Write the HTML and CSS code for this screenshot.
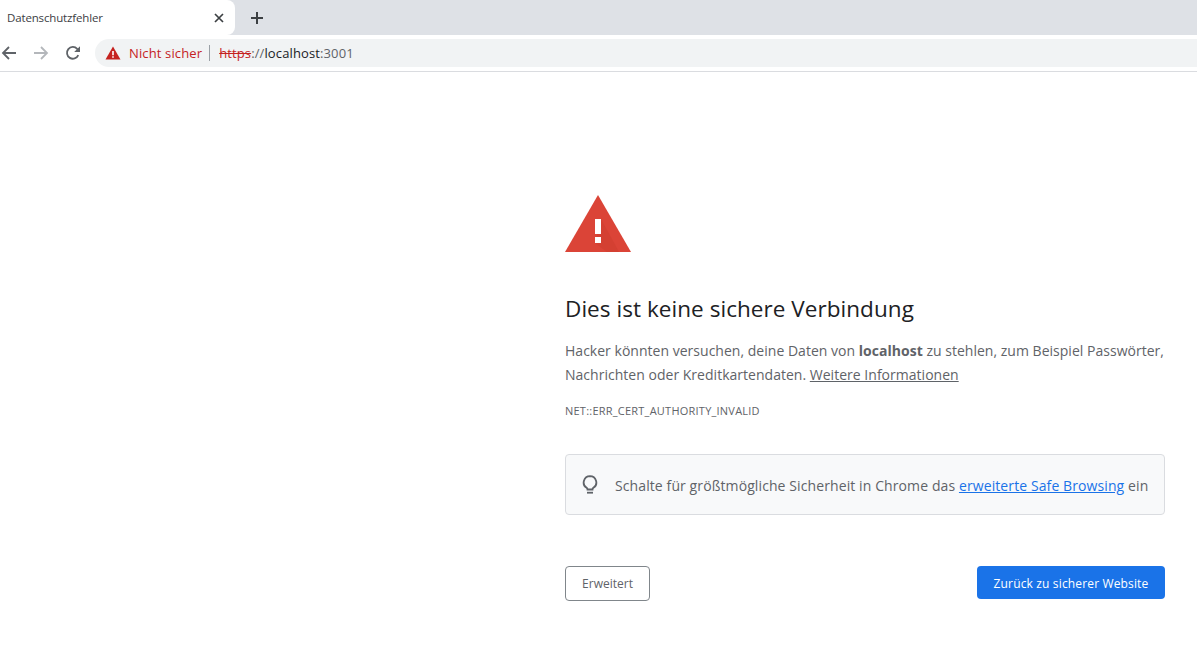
FILE: index.html
```html
<!DOCTYPE html>
<html lang="de">
<head>
<meta charset="utf-8">
<title>Datenschutzfehler</title>
<link rel="stylesheet" href="styles.css">
</head>
<body>
<header class="chrome">
  <div class="tabstrip">
    <div class="tab">
      <span class="tab-title">Datenschutzfehler</span>
      <svg class="tab-close" width="12" height="12" viewBox="0 0 12 12"><path d="M2 2l8 8M10 2l-8 8" stroke="#3c4043" stroke-width="1.700" fill="none"/></svg>
    </div>
    <svg class="new-tab" width="14" height="14" viewBox="0 0 14 14"><path d="M7 1v12M1 7h12" stroke="#3c4043" stroke-width="2" fill="none"/></svg>
  </div>
  <div class="toolbar">
    <svg class="nav-back" width="16" height="16" viewBox="0 0 16 16"><path d="M15 8H2M8 2L2 8l6 6" stroke="#5f6368" stroke-width="1.800" fill="none"/></svg>
    <svg class="nav-forward" width="16" height="16" viewBox="0 0 16 16"><path d="M1 8h13M8 2l6 6-6 6" stroke="#b4b7bb" stroke-width="1.800" fill="none"/></svg>
    <svg class="nav-reload" width="16" height="16" viewBox="0 0 16 16"><path d="M13.300 10.200A5.900 5.900 0 1 1 12.200 3.800L14 5.600" stroke="#5f6368" stroke-width="1.800" fill="none"/><path d="M15 1.200V7H9.200z" fill="#5f6368"/></svg>
    <div class="omnibox">
      <svg class="omni-warn" width="16" height="14" viewBox="0 0 16 14"><path d="M8 0.500L15.500 13.500H0.500z" fill="#c5221f"/><path d="M7.200 5h1.600v4.200H7.200zM7.200 10.200h1.600v1.600H7.200z" fill="#fff"/></svg>
      <span class="omni-status">Nicht sicher</span>
      <span class="omni-sep"></span>
      <span class="omni-url"><s class="omni-scheme">https</s><span class="omni-dim">://</span>localhost<span class="omni-dim">:3001</span></span>
    </div>
  </div>
</header>
<main class="page">
  <div class="interstitial">
    <svg class="big-warn" width="66" height="57" viewBox="0 0 66 57">
      <path d="M33 0L66 57H0z" fill="#db4437"/>
      <path d="M36 24L47 44 54 57H42L30 48z" fill="#c53929" opacity="0.300"/>
      <path d="M30 24h6v15h-6zM30 42h6v6h-6z" fill="#fff"/>
    </svg>
    <h1 class="headline">Dies ist keine sichere Verbindung</h1>
    <p class="body-text">Hacker könnten versuchen, deine Daten von <strong>localhost</strong> zu stehlen, zum Beispiel Passwörter, Nachrichten oder Kreditkartendaten. <a class="learn-more" href="#">Weitere Informationen</a></p>
    <div class="error-code">NET::ERR_CERT_AUTHORITY_INVALID</div>
    <div class="promo">
      <svg class="bulb" width="16" height="20" viewBox="0 0 16 20"><path d="M8 1.200a6.300 6.300 0 0 0-3.400 11.600c.5.400.9 1 .9 1.700h5c0-.7.400-1.300.9-1.700A6.300 6.300 0 0 0 8 1.200z" stroke="#5f6368" stroke-width="1.800" fill="none"/><path d="M5 17.700h6" stroke="#5f6368" stroke-width="1.800"/></svg>
      <span class="promo-text">Schalte für größtmögliche Sicherheit in Chrome das <a class="promo-link" href="#">erweiterte Safe Browsing</a> ein</span>
    </div>
    <div class="actions">
      <button class="btn btn-secondary" type="button">Erweitert</button>
      <button class="btn btn-primary" type="button">Zurück zu sicherer Website</button>
    </div>
  </div>
</main>
</body>
</html>
```
FILE: styles.css
```css
* { box-sizing: border-box; }
html, body { margin: 0; height: 100%; overflow: hidden; background: #fff; }
body { font-family: "Open Sans", "Noto Sans", sans-serif; color: #5f6368; }

.chrome { border-bottom: 1px solid #dadce0; height: 72px; }
.tabstrip { height: 35px; background: #dee1e6; display: flex; align-items: center; }
.tab {
  width: 235px; height: 35px; padding: 0 10px 0 7px;
  background: #fff; border-radius: 0 8px 8px 0;
  display: flex; align-items: center; justify-content: space-between;
}
.tab-title { font-size: 11.500px; color: #3c4043; letter-spacing: -0.150px; }
.new-tab { margin-left: 15px; }

.toolbar { height: 36px; display: flex; align-items: center; padding-left: 1px; }
.nav-forward { margin-left: 16px; }
.nav-reload { margin-left: 16px; }
.omnibox {
  flex: 1; height: 28px; margin-left: 14px; padding-left: 10px;
  background: #f1f3f4; border-radius: 14px 0 0 14px;
  display: flex; align-items: center;
}
.omni-status { margin-left: 8px; font-size: 13px; color: #c5221f; letter-spacing: 0.130px; }
.omni-sep { width: 1px; height: 16px; margin: 0 9px 0 7px; background: #9aa0a6; }
.omni-url { font-size: 13px; color: #202124; letter-spacing: 0.120px; }
.omni-scheme { color: #c5221f; }
.omni-dim { color: #5f6368; }

.page { display: flex; justify-content: flex-end; padding-right: 32px; }
.interstitial { width: 600px; padding-top: 123px; }
.big-warn { display: block; }
.headline { margin: 41px 0 0; font-size: 22.500px; line-height: 32px; font-weight: 400; color: #202124; letter-spacing: 0.050px; }
.body-text { margin: 14px 0 0; font-size: 14px; line-height: 24px; letter-spacing: 0.020px; }
.body-text strong { font-weight: 700; color: #5f6368; }
.learn-more { color: #5f6368; text-decoration: underline; }
.error-code { margin-top: 17px; font-size: 11px; line-height: 14px; letter-spacing: 0.230px; }
.promo {
  margin-top: 36px; height: 61px; padding-left: 16px;
  background: #f8f9fa; border: 1px solid #dadce0; border-radius: 4px;
  display: flex; align-items: center;
}
.promo-text { margin-left: 17px; padding-top: 2px; font-size: 14px; letter-spacing: 0.100px; }
.promo-link { color: #1a73e8; text-decoration: underline; }
.actions { margin-top: 51px; display: flex; justify-content: space-between; align-items: flex-start; }
.btn { font-family: inherit; font-size: 12px; border-radius: 4px; cursor: pointer; }
.btn-secondary { width: 85px; height: 35px; background: #fff; border: 1px solid #80868b; color: #5f6368; letter-spacing: 0; }
.btn-primary { width: 188px; height: 33px; padding-top: 2px; background: #1a73e8; border: 0; color: #fff; font-weight: 500; letter-spacing: 0.150px; }
```
